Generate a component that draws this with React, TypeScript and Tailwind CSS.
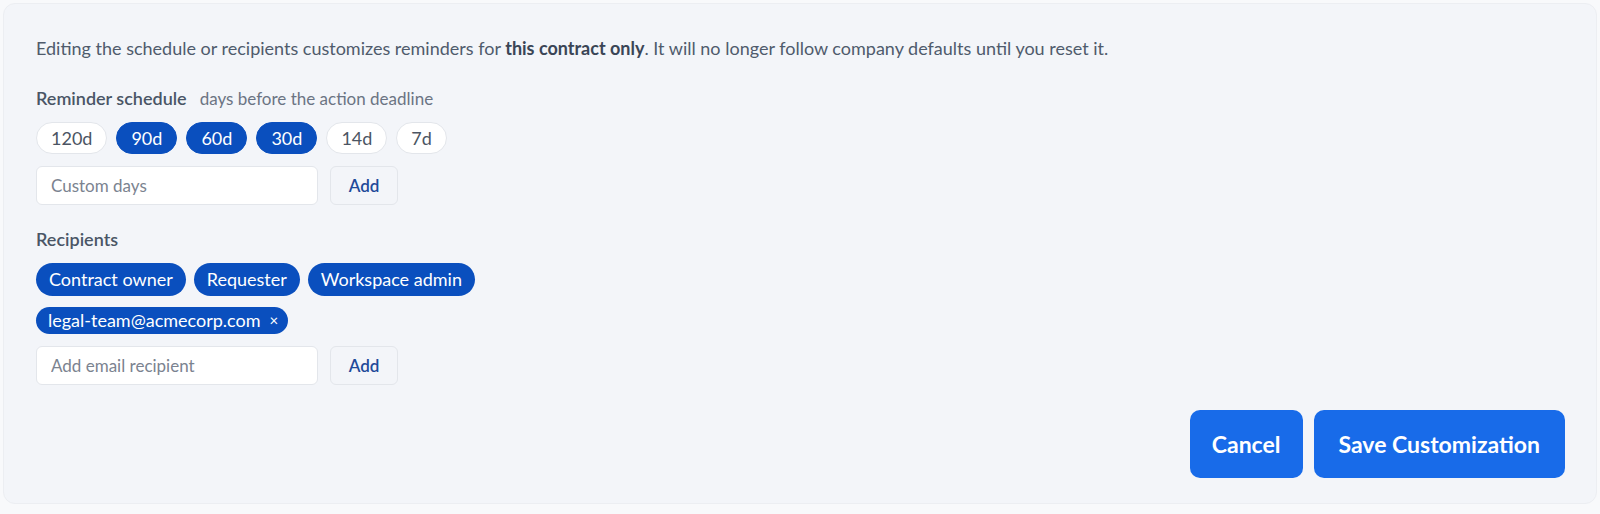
import { useState } from "react";

const presets = [120, 90, 60, 30, 14, 7];
const roles = ["Contract owner", "Requester", "Workspace admin"];

const App = () => {
  const [days, setDays] = useState<number[]>([90, 60, 30]);
  const [emails, setEmails] = useState<string[]>(["legal-team@acmecorp.com"]);
  const [customDays, setCustomDays] = useState("");
  const [email, setEmail] = useState("");

  const toggleDay = (d: number) => {
    setDays((prev) => (prev.includes(d) ? prev.filter((x) => x !== d) : [...prev, d]));
  };

  return (
    <div className="min-h-screen bg-[#f8f9fb] p-[3px] font-['Lato','Noto_Sans',sans-serif]">
      <div className="rounded-xl border border-[#eceef2] bg-[#f3f5f9] pl-[32px] pr-[31px] pt-[33px] pb-[25px]">
        <p className="text-[18px] leading-[22px] text-[#4f5b6c]">
          Editing the schedule or recipients customizes reminders for{" "}
          <span className="font-bold text-[#3a4556]">this contract only</span>. It will no longer follow company defaults until you reset it.
        </p>

        <div className="mt-[28px] flex items-baseline gap-[13px] leading-[22px]">
          <span className="text-[18px] font-semibold text-[#4a5566]">Reminder schedule</span>
          <span className="text-[17px] text-[#6b7483]">days before the action deadline</span>
        </div>

        <div className="mt-3 flex gap-[9px]">
          {presets.map((d) => {
            const on = days.includes(d);
            return (
              <button
                key={d}
                onClick={() => toggleDay(d)}
                className={`h-[32px] rounded-full border px-[14px] text-[18px] leading-none ${on ? "border-[#0a4fbe] bg-[#0a4fbe] text-white" : "border-[#e3e6eb] bg-white text-[#4b5563]"}`}
              >
                {d}d
              </button>
            );
          })}
        </div>

        <div className="mt-3 flex gap-3">
          <input
            value={customDays}
            onChange={(e) => setCustomDays(e.target.value)}
            placeholder="Custom days"
            className="h-[39px] w-[282px] rounded-md border border-[#e3e6eb] bg-white px-[14px] text-[17px] text-[#374151] placeholder:text-[#7b8390] outline-none"
          />
          <button className="h-[39px] w-[68px] rounded-md border border-[#e3e6eb] bg-[#f3f5f9] text-[17px] font-semibold text-[#1f4a9a]">
            Add
          </button>
        </div>

        <div className="mt-[23px] text-[18px] font-semibold leading-[22px] text-[#4a5566]">Recipients</div>

        <div className="mt-[13px] flex gap-2">
          {roles.map((r) => (
            <span key={r} className="flex h-[33px] items-center rounded-full bg-[#0a4fbe] px-[13px] text-[18px] text-white">
              {r}
            </span>
          ))}
        </div>

        <div className="mt-[11px] flex gap-2">
          {emails.map((e) => (
            <span key={e} className="flex h-[27px] items-center gap-[9px] rounded-full bg-[#0a4fbe] pl-3 pr-[10px] text-[18px] text-white">
              {e}
              <button onClick={() => setEmails(emails.filter((x) => x !== e))} className="text-[15px] leading-none text-white">
                ×
              </button>
            </span>
          ))}
        </div>

        <div className="mt-3 flex gap-3">
          <input
            value={email}
            onChange={(e) => setEmail(e.target.value)}
            placeholder="Add email recipient"
            className="h-[39px] w-[282px] rounded-md border border-[#e3e6eb] bg-white px-[14px] text-[17px] text-[#374151] placeholder:text-[#7b8390] outline-none"
          />
          <button className="h-[39px] w-[68px] rounded-md border border-[#e3e6eb] bg-[#f3f5f9] text-[17px] font-semibold text-[#1f4a9a]">
            Add
          </button>
        </div>

        <div className="mt-[25px] flex justify-end gap-[11px]">
          <button className="h-[68px] rounded-[10px] bg-[#186be9] px-[22px] text-[23px] font-bold text-white">Cancel</button>
          <button className="h-[68px] rounded-[10px] bg-[#186be9] px-[25px] text-[23px] font-bold text-white">Save Customization</button>
        </div>
      </div>
    </div>
  );
};

export default App;
